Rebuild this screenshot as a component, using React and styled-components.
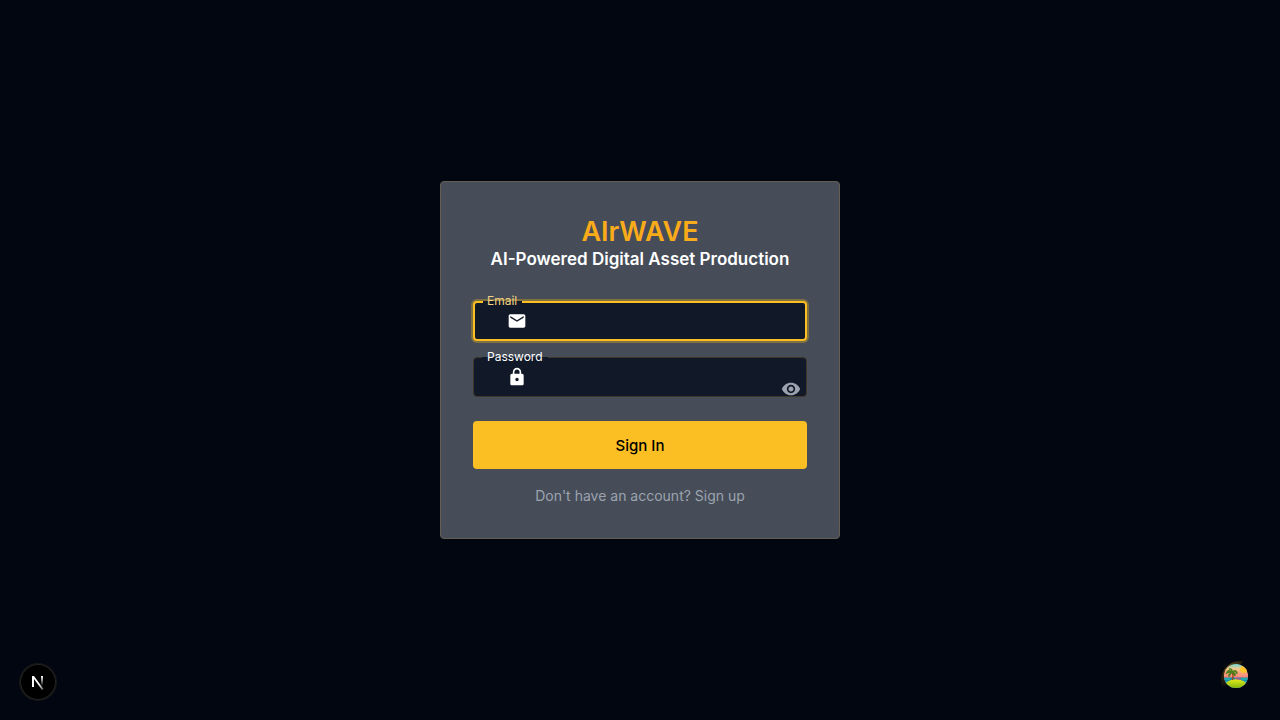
import React, { useState } from "react";
import styled, { createGlobalStyle } from "styled-components";
import { MdEmail, MdLock, MdVisibility, MdVisibilityOff } from "react-icons/md";

const GlobalStyle = createGlobalStyle`
  *, *::before, *::after { box-sizing: border-box; }
  body {
    margin: 0;
    background: #020611;
    color: #ffffff;
    font-family: Inter, sans-serif;
  }
`;

const Page = styled.main`
  min-height: 100vh;
  display: flex;
  align-items: center;
  justify-content: center;
`;

const Card = styled.section`
  width: 100%;
  max-width: 400px;
  padding: 32px;
  border: 1px solid #655f53;
  border-radius: 4px;
  background: #464d58;
`;

const Heading = styled.header`
  margin-bottom: 32px;
  text-align: center;
`;

const Title = styled.h1`
  margin: 0;
  color: #faab1a;
  font-size: 27px;
  font-weight: 600;
  line-height: 35px;
`;

const Subtitle = styled.h2`
  margin: 0;
  font-size: 17px;
  font-weight: 600;
  line-height: 20px;
`;

const Form = styled.form`
  display: flex;
  flex-direction: column;
  gap: 16px;
`;

const Field = styled.div`
  position: relative;
  display: flex;
  align-items: center;
  height: 40px;
  padding-left: 33px;
  border: 1px solid #40382a;
  border-radius: 4px;
  background: #111827;

  &:focus-within {
    padding-left: 32px;
    border: 2px solid #fbbf24;
    box-shadow: 0 0 0 2px #7f7040;
  }
`;

const Label = styled.label`
  position: absolute;
  top: -1px;
  left: 8px;
  height: 2px;
  padding: 0 5px;
  background: #111827;
  color: #ffffff;
  font-size: 12px;
  line-height: 0;
  white-space: nowrap;

  ${Field}:focus-within & {
    top: -2px;
    padding-left: 4px;
    color: #f3d384;
  }
`;

const FieldIcon = styled.span`
  display: flex;
  font-size: 20px;
`;

const Input = styled.input`
  flex: 1;
  min-width: 0;
  height: 100%;
  padding: 0 14px;
  border: 0;
  outline: 0;
  background: transparent;
  color: #ffffff;
  font: inherit;
  font-size: 16px;
`;

const RevealButton = styled.button`
  display: flex;
  align-self: flex-end;
  margin: 0 5px -3px 0;
  padding: 0;
  border: 0;
  background: transparent;
  color: #9ca3af;
  font-size: 20px;
  cursor: pointer;
`;

const SubmitButton = styled.button`
  height: 48px;
  margin-top: 8px;
  border: 0;
  border-radius: 4px;
  background: #fbbf24;
  color: #000000;
  font: inherit;
  font-size: 15px;
  font-weight: 500;
  cursor: pointer;
`;

const SignUp = styled.p`
  margin: 0;
  color: #9ca3af;
  font-size: 14px;
  line-height: 21px;
  text-align: center;
`;

const SignUpLink = styled.a`
  color: inherit;
  text-decoration: none;
`;

const DevBadge = styled.button`
  position: fixed;
  bottom: 20px;
  left: 20px;
  display: flex;
  width: 36px;
  height: 36px;
  padding: 0;
  border: 0;
  border-radius: 50%;
  background: #000000;
  box-shadow: 0 0 0 1px #171717, inset 0 0 0 1px #242424;
  cursor: pointer;
`;

const QueryBadge = styled.button`
  position: fixed;
  right: 28px;
  bottom: 28px;
  display: flex;
  padding: 0;
  border: 0;
  background: transparent;
  cursor: pointer;
`;

function NextLogo() {
  return (
    <svg width="36" height="36" viewBox="0 0 36 36" fill="none" aria-hidden="true">
      <defs>
        <linearGradient id="diagonal" x1="19" y1="20" x2="24" y2="26" gradientUnits="userSpaceOnUse">
          <stop stopColor="#fff" />
          <stop offset="1" stopColor="#fff" stopOpacity="0.3" />
        </linearGradient>
        <linearGradient id="stem" x1="0" y1="12" x2="0" y2="22" gradientUnits="userSpaceOnUse">
          <stop stopColor="#fff" />
          <stop offset="1" stopColor="#fff" stopOpacity="0" />
        </linearGradient>
      </defs>
      <path d="M12 12h2l9.5 13-1.5 1-8-11v8h-2Z" fill="url(#diagonal)" />
      <path d="M21 12h2v10h-2z" fill="url(#stem)" />
    </svg>
  );
}

function IslandLogo() {
  return (
    <svg width="32" height="32" viewBox="0 0 32 32" aria-hidden="true">
      <defs>
        <clipPath id="scene"><circle cx="16" cy="16" r="12" /></clipPath>
        <linearGradient id="sky" x1="0" y1="4" x2="0" y2="18" gradientUnits="userSpaceOnUse">
          <stop stopColor="#6ddad5" />
          <stop offset="0.35" stopColor="#f5c98b" />
          <stop offset="0.7" stopColor="#ff9b7c" />
          <stop offset="1" stopColor="#fb7f78" />
        </linearGradient>
        <linearGradient id="sand" x1="0" y1="19" x2="0" y2="28" gradientUnits="userSpaceOnUse">
          <stop stopColor="#e5ed1e" />
          <stop offset="1" stopColor="#86b80c" />
        </linearGradient>
        <linearGradient id="trail" x1="23" y1="1" x2="1" y2="26" gradientUnits="userSpaceOnUse">
          <stop stopColor="#171206" />
          <stop offset="0.4" stopColor="#6b5320" />
          <stop offset="0.7" stopColor="#30270f" />
          <stop offset="1" stopColor="#090a0e" />
        </linearGradient>
      </defs>
      <path d="M24 1C15 0 8 4 4 10C1 15 0 21 1 27L7 25V13L20 5Z" fill="url(#trail)" />
      <g clipPath="url(#scene)">
        <path d="M3 3H30V29H3Z" fill="url(#sky)" />
        <circle cx="23.5" cy="9.5" r="3.5" fill="#ffc52a" />
        <path d="M3 17.5H29V29H3Z" fill="#168caa" />
        <path d="M4 19H10M21 19H29M4 22H8M24 22H28" stroke="#26c5bd" strokeWidth="1" />
        <ellipse cx="16" cy="25" rx="10.5" ry="5.8" fill="url(#sand)" />
        <path d="M12.5 20C13.5 17 13 14 12 12" fill="none" stroke="#9c451b" strokeWidth="1.4" />
        <path d="M12 12C9 9 7 10 6 14C8 12 10 13 12 12C9 13 8 15 9 17C10 15 11 14 12 12C14 14 13 15 15 16C16 14 15 12 12 12C15 11 16 12 17 14C18 11 15 9 12 12C13 9 11 8 9 9C11 9 11 10 12 12Z" fill="#47801b" stroke="#47801b" strokeWidth="0.8" />
        <path d="m15 17.5 2 1h4v1h-4l-2-1Z" fill="#eb447a" />
      </g>
    </svg>
  );
}

export default function App() {
  const [visible, setVisible] = useState(false);

  return (
    <>
      <GlobalStyle />
      <Page>
        <Card>
          <Heading>
            <Title>AIrWAVE</Title>
            <Subtitle>AI-Powered Digital Asset Production</Subtitle>
          </Heading>
          <Form onSubmit={(event) => event.preventDefault()}>
            <Field>
              <Label htmlFor="email">Email</Label>
              <FieldIcon><MdEmail /></FieldIcon>
              <Input id="email" type="email" autoComplete="email" autoFocus />
            </Field>
            <Field>
              <Label htmlFor="password">Password</Label>
              <FieldIcon><MdLock /></FieldIcon>
              <Input id="password" type={visible ? "text" : "password"} autoComplete="current-password" />
              <RevealButton type="button" aria-label="Toggle password visibility" onClick={() => setVisible(!visible)}>
                {visible ? <MdVisibilityOff /> : <MdVisibility />}
              </RevealButton>
            </Field>
            <SubmitButton type="submit">Sign In</SubmitButton>
            <SignUp>
              <SignUpLink href="#signup">Don't have an account? Sign up</SignUpLink>
            </SignUp>
          </Form>
        </Card>
      </Page>
      <DevBadge type="button" aria-label="Open developer tools"><NextLogo /></DevBadge>
      <QueryBadge type="button" aria-label="Open query tools"><IslandLogo /></QueryBadge>
    </>
  );
}
